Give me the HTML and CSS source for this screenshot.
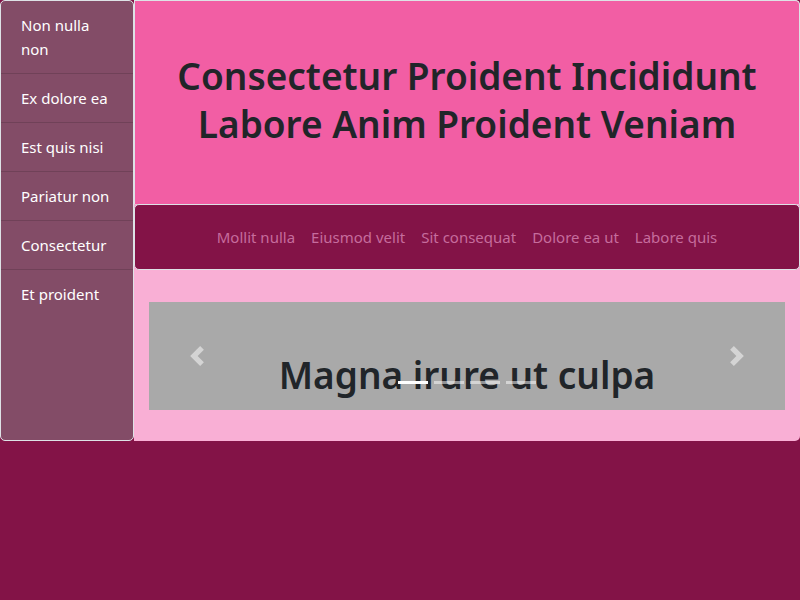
FILE: index.html
```html
<!DOCTYPE html>
<html lang="la">
<head>
<meta charset="utf-8">
<title>Consectetur</title>
<link rel="stylesheet" href="styles.css">
</head>
<body>
<div class="layout">
  <aside class="sidebar">
    <ul class="side-list">
      <li class="side-item">Non nulla non</li>
      <li class="side-item">Ex dolore ea</li>
      <li class="side-item">Est quis nisi</li>
      <li class="side-item">Pariatur non</li>
      <li class="side-item">Consectetur</li>
      <li class="side-item">Et proident</li>
    </ul>
  </aside>
  <main class="main">
    <header class="hero">
      <h1 class="hero-title">Consectetur Proident Incididunt Labore Anim Proident Veniam</h1>
    </header>
    <nav class="topnav">
      <a class="nav-link" href="#">Mollit nulla</a>
      <a class="nav-link" href="#">Eiusmod velit</a>
      <a class="nav-link" href="#">Sit consequat</a>
      <a class="nav-link" href="#">Dolore ea ut</a>
      <a class="nav-link" href="#">Labore quis</a>
    </nav>
    <section class="content">
      <div class="carousel">
        <h2 class="slide-title">Magna irure ut culpa</h2>
        <ol class="indicators">
          <li class="ind active"></li>
          <li class="ind"></li>
          <li class="ind"></li>
          <li class="ind"></li>
        </ol>
        <a class="control prev" href="#"><svg class="chev" viewBox="0 0 8 8" width="20" height="20"><path d="M5.25 0l-4 4 4 4 1.5-1.5L4.25 4l2.5-2.5L5.25 0z"/></svg></a>
        <a class="control next" href="#"><svg class="chev" viewBox="0 0 8 8" width="20" height="20"><path d="M2.75 0l-1.5 1.5L3.75 4l-2.5 2.5L2.75 8l4-4-4-4z"/></svg></a>
      </div>
    </section>
  </main>
</div>
</body>
</html>
```
FILE: styles.css
```css
* { box-sizing: border-box; }
html, body { margin: 0; padding: 0; }
body {
  background: #831347;
  font-family: "Noto Sans", "Liberation Sans", sans-serif;
  font-size: 15px;
  line-height: 24px;
  color: #212529;
}
.layout {
  display: flex;
  height: 441px;
}
.sidebar {
  width: 134px;
  flex: none;
  background: #834c67;
  border: 1px solid #dee2e6;
  border-radius: 5px;
  overflow: hidden;
}
.side-list {
  list-style: none;
  margin: 0;
  padding: 0;
}
.side-item {
  padding: 12px 20px;
  color: #fff;
  border-bottom: 1px solid rgba(0, 0, 0, 0.14);
}
.side-item:last-child { border-bottom: none; }
.main {
  flex: 1;
  display: flex;
  flex-direction: column;
  background: #f9afd5;
  border-radius: 0 5px 5px 0;
}
.hero {
  height: 204px;
  flex: none;
  background: #f25ea4;
  border: 1px solid #dee2e6;
  border-bottom: none;
  border-radius: 0 5px 0 0;
  display: flex;
  align-items: center;
  justify-content: center;
  padding: 0 15px 6px;
}
.hero-title {
  margin: 0;
  font-size: 37px;
  line-height: 48px;
  font-weight: 600;
  text-align: center;
  color: #212529;
}
.topnav {
  height: 66px;
  flex: none;
  background: #831347;
  border: 1px solid #dee2e6;
  border-radius: 5px;
  display: flex;
  align-items: center;
  justify-content: center;
}
.nav-link {
  padding: 0 8px;
  color: #c66c9d;
  text-decoration: none;
}
.content {
  flex: 1;
  padding: 32px 15px 0;
}
.carousel {
  position: relative;
  height: 108px;
  background: #a9a9a9;
  padding-top: 49px;
  overflow: hidden;
}
.slide-title {
  margin: 0;
  font-size: 37px;
  line-height: 48px;
  font-weight: 600;
  text-align: center;
  color: #212529;
}
.indicators {
  position: absolute;
  left: 15%;
  right: 15%;
  bottom: 16px;
  margin: 0;
  padding: 0;
  list-style: none;
  display: flex;
  justify-content: center;
}
.ind {
  width: 30px;
  height: 23px;
  margin: 0 3px;
  background: #fff;
  background-clip: padding-box;
  border-top: 10px solid transparent;
  border-bottom: 10px solid transparent;
  opacity: 0.5;
}
.ind.active { opacity: 1; }
.control {
  position: absolute;
  top: 0;
  bottom: 0;
  width: 15%;
  display: flex;
  align-items: center;
  justify-content: center;
  opacity: 0.5;
}
.control.prev { left: 0; }
.control.next { right: 0; }
.chev { fill: #fff; display: block; }
```
